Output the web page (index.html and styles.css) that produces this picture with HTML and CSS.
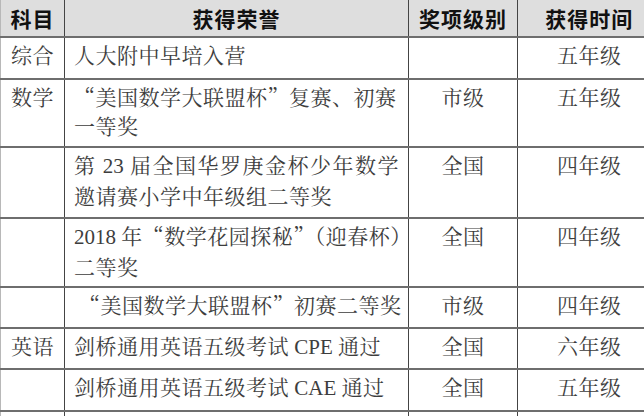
FILE: index.html
```html
<!DOCTYPE html>
<html lang="zh-CN">
<head>
<meta charset="utf-8">
<title>获得荣誉</title>
<link rel="stylesheet" href="styles.css">
</head>
<body>
<table class="awards">
  <colgroup>
    <col class="c-subj">
    <col class="c-honor">
    <col class="c-level">
    <col class="c-time">
  </colgroup>
  <thead>
    <tr class="head">
      <th>科目</th>
      <th>获得荣誉</th>
      <th>奖项级别</th>
      <th>获得时间</th>
    </tr>
  </thead>
  <tbody>
    <tr class="h42">
      <td class="subj">综合</td>
      <td class="honor">人大附中早培入营</td>
      <td class="level"></td>
      <td class="time">五年级</td>
    </tr>
    <tr class="h68">
      <td class="subj">数学</td>
      <td class="honor">“美国数学大联盟杯”复赛、初赛<br>一等奖</td>
      <td class="level">市级</td>
      <td class="time">五年级</td>
    </tr>
    <tr class="h71">
      <td class="subj"></td>
      <td class="honor"><span class="spread">第<span class="lat"> 23 </span>届全国华罗庚金杯少年数学</span>邀请赛小学中年级组二等奖</td>
      <td class="level">全国</td>
      <td class="time">四年级</td>
    </tr>
    <tr class="h69">
      <td class="subj"></td>
      <td class="honor"><span class="lat">2018 </span>年“数学花园探秘”（迎春杯）<br>二等奖</td>
      <td class="level">全国</td>
      <td class="time">四年级</td>
    </tr>
    <tr class="h41">
      <td class="subj"></td>
      <td class="honor indent">“美国数学大联盟杯”初赛二等奖</td>
      <td class="level">市级</td>
      <td class="time">四年级</td>
    </tr>
    <tr class="h41">
      <td class="subj">英语</td>
      <td class="honor">剑桥通用英语五级考试<span class="lat"> CPE </span>通过</td>
      <td class="level">全国</td>
      <td class="time">六年级</td>
    </tr>
    <tr class="h42">
      <td class="subj"></td>
      <td class="honor">剑桥通用英语五级考试<span class="lat"> CAE </span>通过</td>
      <td class="level">全国</td>
      <td class="time">五年级</td>
    </tr>
    <tr class="h42">
      <td class="subj"></td>
      <td class="honor"></td>
      <td class="level"></td>
      <td class="time"></td>
    </tr>
  </tbody>
</table>
</body>
</html>
```
FILE: styles.css
```css
html, body {
  margin: 0;
  padding: 0;
  background: #ffffff;
  overflow: hidden;
}

body {
  width: 644px;
  height: 416px;
}

.awards {
  border-collapse: collapse;
  table-layout: fixed;
  width: 660px;
  font-family: "Noto Serif CJK SC", "Noto Sans CJK SC", sans-serif;
  font-size: 21px;
  color: #3d3d3d;
}

.c-subj { width: 64px; }
.c-honor { width: 344px; }
.c-level { width: 109px; }
.c-time { width: 143px; }

.awards th,
.awards td {
  padding: 2px 9px 0;
  vertical-align: top;
  line-height: 29px;
  letter-spacing: 0.5px;
  border-left: 1px solid #444444;
  border-top: 2px solid #6e6e6e;
  white-space: nowrap;
  font-weight: 400;
}

.awards th:first-child,
.awards td:first-child {
  border-left: 1px solid #b8b8b8;
}

.awards thead th {
  background: #dedede;
  color: #111111;
  font-weight: 700;
  font-family: "Noto Sans CJK SC", sans-serif;
  text-align: center;
  vertical-align: middle;
  padding: 0;
  border-top: none;
  letter-spacing: 1px;
}

.head { height: 37px; }
.h41 { height: 41px; }
.h42 { height: 42px; }
.h68 { height: 68px; }
.h69 { height: 69px; }
.h71 { height: 71px; }

.subj,
.level,
.time {
  text-align: center;
}

.subj {
  padding-left: 0;
  padding-right: 0;
}

.honor {
  text-align: left;
  padding-right: 10px;
}

.spread {
  display: block;
  white-space: normal;
  text-align: justify;
  text-align-last: justify;
}

.indent {
  text-indent: 5px;
}

.lat {
  font-family: "Liberation Serif", serif;
  letter-spacing: 0;
}
```
